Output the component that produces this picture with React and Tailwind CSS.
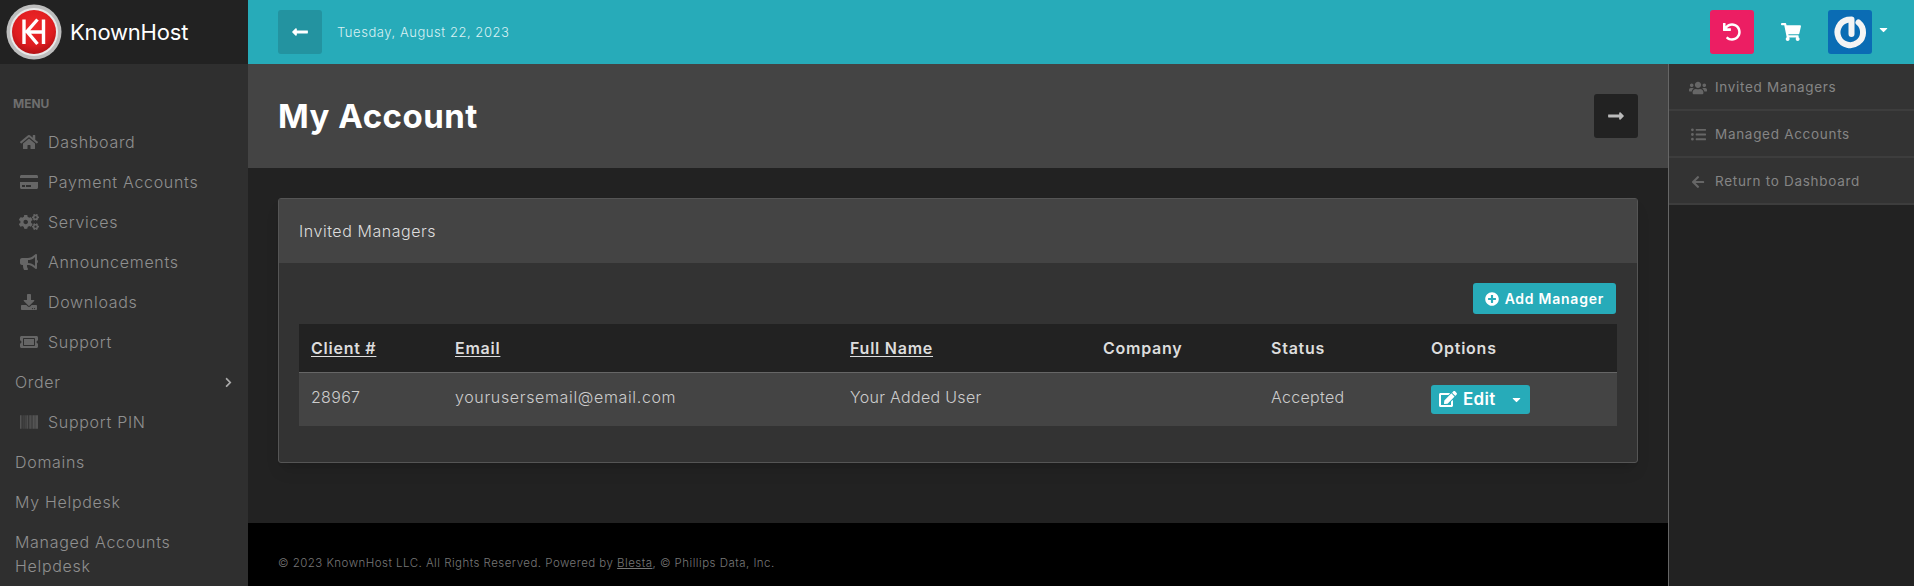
import {
  FaHome, FaCreditCard, FaCogs, FaBullhorn, FaDownload, FaTicketAlt, FaBarcode, FaChevronRight,
  FaLongArrowAltLeft, FaLongArrowAltRight, FaUndo, FaShoppingCart, FaUsers, FaListUl, FaArrowLeft,
  FaPlusCircle, FaEdit, FaCaretDown,
} from 'react-icons/fa';

const menu = [
  { label: 'Dashboard', icon: FaHome, size: 18 },
  { label: 'Payment Accounts', icon: FaCreditCard, size: 18 },
  { label: 'Services', icon: FaCogs, size: 20 },
  { label: 'Announcements', icon: FaBullhorn, size: 18 },
  { label: 'Downloads', icon: FaDownload, size: 16 },
  { label: 'Support', icon: FaTicketAlt, size: 18 },
  { label: 'Order', arrow: true },
  { label: 'Support PIN', icon: FaBarcode, size: 18 },
  { label: 'Domains' },
  { label: 'My Helpdesk' },
  { label: 'Managed Accounts Helpdesk' },
];

const sideLinks = [
  { label: 'Invited Managers', icon: FaUsers, size: 18 },
  { label: 'Managed Accounts', icon: FaListUl, size: 15 },
  { label: 'Return to Dashboard', icon: FaArrowLeft, size: 14 },
];

function Logo() {
  return (
    <svg width="56" height="56" viewBox="0 0 56 56" className="shrink-0">
      <defs>
        <radialGradient id="red" cx="50%" cy="35%" r="70%">
          <stop offset="0%" stopColor="#f0282a" />
          <stop offset="65%" stopColor="#dd1c1f" />
          <stop offset="100%" stopColor="#a80f12" />
        </radialGradient>
      </defs>
      <circle cx="28" cy="28" r="27.5" fill="#bdbdbd" />
      <circle cx="28" cy="28" r="24" fill="#e9e9e9" />
      <circle cx="28" cy="28" r="22" fill="url(#red)" />
      <path
        d="M18 15.5V40M37.5 15.5V40M23 28H37.5M31.5 15.5L21 27.5L31.5 40"
        fill="none"
        stroke="#fff"
        strokeWidth="3.4"
      />
    </svg>
  );
}

function PowerAvatar() {
  return (
    <div className="w-11 h-11 rounded-[3px] bg-[#0a6cb4]">
      <svg width="44" height="44" viewBox="0 0 44 44">
        <path
          d="M30.5 12.5A12.8 12.8 0 1 1 19.5 9.8L23.5 9.6V24"
          fill="none"
          stroke="#f4f4f4"
          strokeWidth="6"
          strokeLinecap="round"
          strokeLinejoin="round"
        />
      </svg>
    </div>
  );
}

export default function App() {
  return (
    <div className="h-screen overflow-hidden flex flex-col bg-[#222] font-[family-name:Inter,sans-serif]">
      <header className="h-16 flex shrink-0">
        <div className="w-[248px] bg-[#222] flex items-center pl-1.5 gap-[8px]">
          <Logo />
          <span className="text-white text-[22px] tracking-[-0.2px]">KnownHost</span>
        </div>
        <div className="flex-1 bg-[#27abb9] flex items-center pl-[30px] pr-[24px]">
          <button className="w-11 h-11 rounded-[3px] bg-[#2393a0] text-white flex items-center justify-center">
            <FaLongArrowAltLeft size={18} />
          </button>
          <span className="ml-[15px] pt-[2px] text-[13px] font-light tracking-[0.55px] text-[#d8f0f3]">Tuesday, August 22, 2023</span>
          <div className="ml-auto flex items-center">
            <button className="w-11 h-11 rounded-[3px] bg-[#ec1e63] text-white flex items-center justify-center">
              <FaUndo size={18} />
            </button>
            <FaShoppingCart size={20} className="text-white ml-[27px]" />
            <div className="ml-[27px]"><PowerAvatar /></div>
            <FaCaretDown size={13} className="text-white ml-[5px] mb-1.5" />
          </div>
        </div>
      </header>

      <div className="flex flex-1 min-h-0">
        <aside className="w-[248px] shrink-0 bg-[#2f2f2f] pt-[32px] overflow-hidden">
          <div className="pl-[13px] text-[12px] font-bold text-[#6e6e6e] leading-4 mb-[10px]">MENU</div>
          <ul className="text-[16px] font-light text-[#8f8f8f] tracking-[0.7px] leading-6">
            {menu.map(item => (
              <li
                key={item.label}
                className={`flex items-center py-2 ${item.icon ? 'pl-[19px]' : 'pl-[15px]'} pr-[14px]`}
              >
                {item.icon && (
                  <span className="w-5 mr-[9px] flex justify-center shrink-0">
                    <item.icon size={item.size} className="text-[#666]" />
                  </span>
                )}
                <span className="w-[190px]">{item.label}</span>
                {item.arrow && <FaChevronRight size={11} className="ml-auto text-[#aaa]" />}
              </li>
            ))}
          </ul>
        </aside>

        <main className="flex-1 min-w-0 flex flex-col">
          <div className="h-[104px] shrink-0 bg-[#444] flex items-center justify-between px-[30px]">
            <h1 className="pt-[2px] text-[33px] font-bold text-white tracking-[0.5px]">My Account</h1>
            <button className="w-11 h-11 rounded-[3px] bg-[#222] text-[#bbb] flex items-center justify-center">
              <FaLongArrowAltRight size={18} />
            </button>
          </div>

          <div className="flex-1 bg-[#222] pt-[30px] px-[30px]">
            <section className="h-[265px] rounded-[3px] border border-[#555] bg-[#333] shadow-lg">
              <div className="h-[64px] bg-[#444] flex items-center px-5 text-[16px] font-light text-[#ddd] tracking-[0.55px]">
                Invited Managers
              </div>
              <div className="px-5 pt-5">
                <div className="flex justify-end">
                  <button className="h-[31px] mr-px px-3 rounded-[3px] bg-[#27abb9] text-white text-[14px] font-semibold flex items-center gap-[6px] tracking-[0.75px]">
                    <FaPlusCircle size={14} />
                    Add Manager
                  </button>
                </div>
                <table className="mt-[10px] w-full table-fixed text-[16px] text-[#ccc]">
                  <colgroup>
                    <col className="w-[144px]" />
                    <col className="w-[395px]" />
                    <col className="w-[253px]" />
                    <col className="w-[168px]" />
                    <col className="w-[160px]" />
                    <col />
                  </colgroup>
                  <thead>
                    <tr className="h-[48px] bg-[#222] text-left text-[#ddd] border-b border-[#666] tracking-[0.75px]">
                      <th className="px-3 font-semibold"><span className="underline underline-offset-2">Client #</span></th>
                      <th className="px-3 font-semibold"><span className="underline underline-offset-2">Email</span></th>
                      <th className="px-3 font-semibold"><span className="underline underline-offset-2">Full Name</span></th>
                      <th className="px-3 font-semibold">Company</th>
                      <th className="px-3 font-semibold">Status</th>
                      <th className="px-3 font-semibold">Options</th>
                    </tr>
                  </thead>
                  <tbody>
                    <tr className="h-[54px] bg-[#444] font-light tracking-[0.3px]">
                      <td className="px-3 pb-[4px]">28967</td>
                      <td className="px-3 pb-[4px] tracking-[0.65px]">yourusersemail@email.com</td>
                      <td className="px-3 pb-[4px]">Your Added User</td>
                      <td className="px-3"></td>
                      <td className="px-3 pb-[4px]">Accepted</td>
                      <td className="px-3">
                        <button className="w-[99px] h-[29px] rounded-[3px] bg-[#27abb9] text-white text-[17px] font-semibold flex items-center pl-2">
                          <FaEdit size={18} />
                          <span className="ml-[6px]">Edit</span>
                          <FaCaretDown size={13} className="ml-auto mr-[7px]" />
                        </button>
                      </td>
                    </tr>
                  </tbody>
                </table>
              </div>
            </section>
          </div>

          <footer className="h-[63px] shrink-0 bg-black flex items-center pl-[30px] pt-[19px] text-[11.5px] font-light text-[#777] tracking-[0.47px]">
            <span>© 2023 KnownHost LLC. All Rights Reserved. Powered by <a className="underline">Blesta</a>, © Phillips Data, Inc.</span>
          </footer>
        </main>

        <aside className="w-[246px] shrink-0 border-l border-[#666] bg-[#222]">
          {sideLinks.map(link => (
            <div key={link.label} className="h-[47px] bg-[#333] border-b-2 border-[#3d3d3d] flex items-center pl-[19px] pt-[2px] text-[13.5px] text-[#858585] tracking-[0.7px]">
              <span className="w-5 mr-[7px] flex justify-center">
                <link.icon size={link.size} className="text-[#666]" />
              </span>
              {link.label}
            </div>
          ))}
        </aside>
      </div>
    </div>
  );
}
